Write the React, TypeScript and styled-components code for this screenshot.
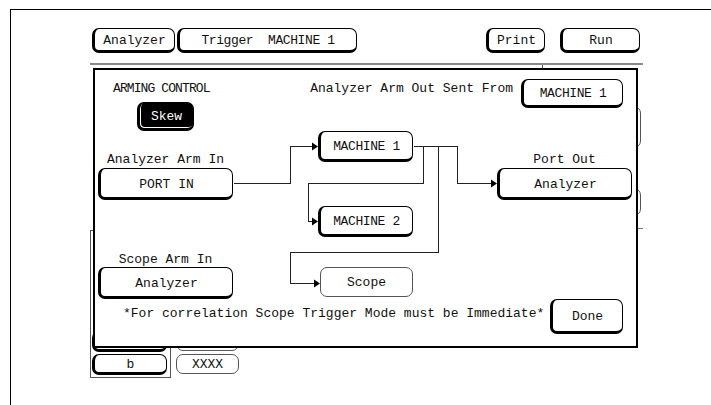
import React from "react";
import styled, { createGlobalStyle, css } from "styled-components";

const GlobalStyle = createGlobalStyle`
  html, body {
    margin: 0;
    background: #fff;
  }
  body {
    padding: 9px 0 0 10px;
    width: 711px;
    height: 405px;
    box-sizing: border-box;
    overflow: hidden;
    font-family: "Liberation Mono", "DejaVu Sans Mono", monospace;
    font-size: 13px;
    line-height: 13px;
    color: #111;
  }
`;

const Screen = styled.div`
  position: relative;
  height: 396px;
  box-sizing: border-box;
  border-top: 1px solid #000;
  border-left: 1px solid #000;
  display: flex;
  flex-direction: column;
`;

const Toolbar = styled.div`
  display: flex;
  align-items: flex-start;
  gap: 2px;
  margin-top: 18px;
  padding: 0 71px 0 81px;
`;

const ToolGroup = styled.div`
  display: flex;
  gap: 15px;
  margin-left: auto;
`;

const Separator = styled.div`
  position: relative;
  margin: 10px 0 0 79px;
  width: 553px;
  height: 2px;
  background: #8a8a8a;

  &::after {
    content: "";
    position: absolute;
    left: 452px;
    top: 2px;
    width: 1px;
    height: 4px;
    background: #555;
  }
`;

const Key = styled.div<{ $w: number; $h: number; $flat?: boolean; $dark?: boolean; $tight?: boolean }>`
  box-sizing: border-box;
  flex: none;
  width: ${(p) => p.$w}px;
  height: ${(p) => p.$h}px;
  display: flex;
  align-items: center;
  justify-content: center;
  padding-top: 2px;
  white-space: pre;
  background: #fff;
  border: 1px solid #000;
  border-left-width: 3px;
  border-bottom-width: 3px;
  border-radius: 7px;
  letter-spacing: ${(p) => (p.$tight ? "-0.4px" : "0")};
  ${(p) =>
    p.$flat &&
    css`
      border: 1px solid #555;
      padding-top: 0;
    `}
  ${(p) =>
    p.$dark &&
    css`
      background: #000;
      color: #fff;
      box-shadow: inset 1px -1px 0 #fff;
    `}
`;

const Workspace = styled.div`
  flex: 1;
  display: flex;
  align-items: flex-end;
  gap: 5px;
  padding: 0 70px 27px 79px;
`;

const Panel = styled.div`
  box-sizing: border-box;
  width: 81px;
  height: 148px;
  border: 1px solid #555;
  display: flex;
  flex-direction: column;
  justify-content: flex-end;
  gap: 2px;
  padding: 0 3px 2px 1px;
`;

const KeyColumn = styled.div`
  height: 148px;
  box-sizing: border-box;
  display: flex;
  flex-direction: column;
  justify-content: flex-end;
  gap: 3px;
  padding-bottom: 4px;
`;

const SideStack = styled.div`
  align-self: flex-start;
  margin-left: auto;
  display: flex;
  flex-direction: column;
  align-items: flex-end;
  gap: 40px;
  padding-top: 41px;
`;

const Tick = styled.div`
  width: 6px;
  height: 1px;
  margin: -28px -2px 0 0;
  background: #777;
`;

const Dialog = styled.div`
  position: absolute;
  left: 82px;
  top: 58px;
  z-index: 2;
  box-sizing: border-box;
  width: 545px;
  height: 280px;
  border: 2px solid #000;
  background: #fff;
  display: flex;
  flex-direction: column;
`;

const DialogHeader = styled.div`
  height: 61px;
  flex: none;
  display: flex;
  justify-content: space-between;
  padding: 0 13px 0 18px;
`;

const ArmingBlock = styled.div`
  display: flex;
  flex-direction: column;
  align-items: flex-start;
  gap: 7px;
  padding-top: 12px;
`;

const Indented = styled.div`
  margin-left: 24px;
`;

const ArmOut = styled.div`
  display: flex;
  align-items: flex-start;
  gap: 8px;
`;

const Label = styled.div<{ $top?: number; $spacing?: number }>`
  white-space: pre;
  margin-top: ${(p) => p.$top ?? 0}px;
  letter-spacing: ${(p) => p.$spacing ?? 0}px;
`;

const Diagram = styled.div`
  position: relative;
  height: 168px;
  flex: none;
`;

const Node = styled.div<{ $x: number; $y: number; $gap?: number }>`
  position: absolute;
  left: ${(p) => p.$x}px;
  top: ${(p) => p.$y}px;
  display: flex;
  flex-direction: column;
  align-items: center;
  gap: ${(p) => p.$gap ?? 2}px;
`;

const Wires = styled.svg`
  position: absolute;
  left: 0;
  top: 0;
  overflow: visible;
  pointer-events: none;
`;

const DialogFooter = styled.div`
  flex: 1;
  display: flex;
  align-items: flex-start;
  padding: 0 13px 0 28px;
`;

const Push = styled.div`
  margin-left: auto;
`;

type Pt = [number, number];

// wire routes in diagram coordinates, last point = arrow tip
const wires: Pt[][] = [
  [[138, 52], [195, 52], [195, 15], [223, 15]],
  [[318, 15], [362, 15], [362, 52], [402, 52]],
  [[328, 15], [328, 52], [213, 52], [213, 90], [223, 90]],
  [[343, 15], [343, 121], [195, 121], [195, 152], [225, 152]],
];

function Wire({ pts }: { pts: Pt[] }) {
  const last = pts[pts.length - 1];
  const line = pts.map(([x, y], i) => (i === pts.length - 1 ? [x - 5, y] : [x, y]));
  const d = line.map(([x, y]) => `${x + 0.5},${y + 0.5}`).join(" ");
  const tx = last[0];
  const ty = last[1] + 0.5;
  return (
    <g>
      <polyline points={d} fill="none" stroke="#222" strokeWidth={1} shapeRendering="crispEdges" />
      <polygon points={`${tx - 6},${ty - 4} ${tx},${ty} ${tx - 6},${ty + 4}`} fill="#000" />
    </g>
  );
}

export default function App() {
  return (
    <>
      <GlobalStyle />
      <Screen>
        <Toolbar>
          <Key $w={83} $h={25}>Analyzer</Key>
          <Key $w={180} $h={25} $tight>{"Trigger  MACHINE 1"}</Key>
          <ToolGroup>
            <Key $w={59} $h={25}>Print</Key>
            <Key $w={80} $h={25}>Run</Key>
          </ToolGroup>
        </Toolbar>
        <Separator />
        <Workspace>
          <Panel>
            <Key $w={75} $h={21} />
            <Key $w={75} $h={21}>b</Key>
          </Panel>
          <KeyColumn>
            <Key $w={63} $h={20} $flat />
            <Key $w={63} $h={20} $flat>XXXX</Key>
          </KeyColumn>
          <SideStack>
            <Key $w={60} $h={42} $flat />
            <Key $w={60} $h={28} $flat />
            <Tick />
          </SideStack>
        </Workspace>

        <Dialog>
          <DialogHeader>
            <ArmingBlock>
              <Label $spacing={-0.9}>ARMING CONTROL</Label>
              <Indented>
                <Key $w={57} $h={29} $dark>Skew</Key>
              </Indented>
            </ArmingBlock>
            <ArmOut>
              <Label $top={12}>Analyzer Arm Out Sent From</Label>
              <Key $w={102} $h={29} $tight style={{ marginTop: 9 }}>MACHINE 1</Key>
            </ArmOut>
          </DialogHeader>

          <Diagram>
            <Wires width={541} height={168}>
              {wires.map((pts, i) => (
                <Wire key={i} pts={pts} />
              ))}
            </Wires>
            <Node $x={3} $y={22}>
              <Label>Analyzer Arm In</Label>
              <Key $w={135} $h={32}>PORT IN</Key>
            </Node>
            <Node $x={3} $y={122} $gap={1}>
              <Label>Scope Arm In</Label>
              <Key $w={135} $h={32}>Analyzer</Key>
            </Node>
            <Node $x={402} $y={22}>
              <Label>Port Out</Label>
              <Key $w={135} $h={32}>Analyzer</Key>
            </Node>
            <Node $x={223} $y={0}>
              <Key $w={95} $h={31} $tight>MACHINE 1</Key>
            </Node>
            <Node $x={223} $y={75}>
              <Key $w={95} $h={31} $tight>MACHINE 2</Key>
            </Node>
            <Node $x={225} $y={136}>
              <Key $w={93} $h={30} $flat>Scope</Key>
            </Node>
          </Diagram>

          <DialogFooter>
            <Label $top={8}>*For correlation Scope Trigger Mode must be Immediate*</Label>
            <Push>
              <Key $w={73} $h={35}>Done</Key>
            </Push>
          </DialogFooter>
        </Dialog>
      </Screen>
    </>
  );
}
